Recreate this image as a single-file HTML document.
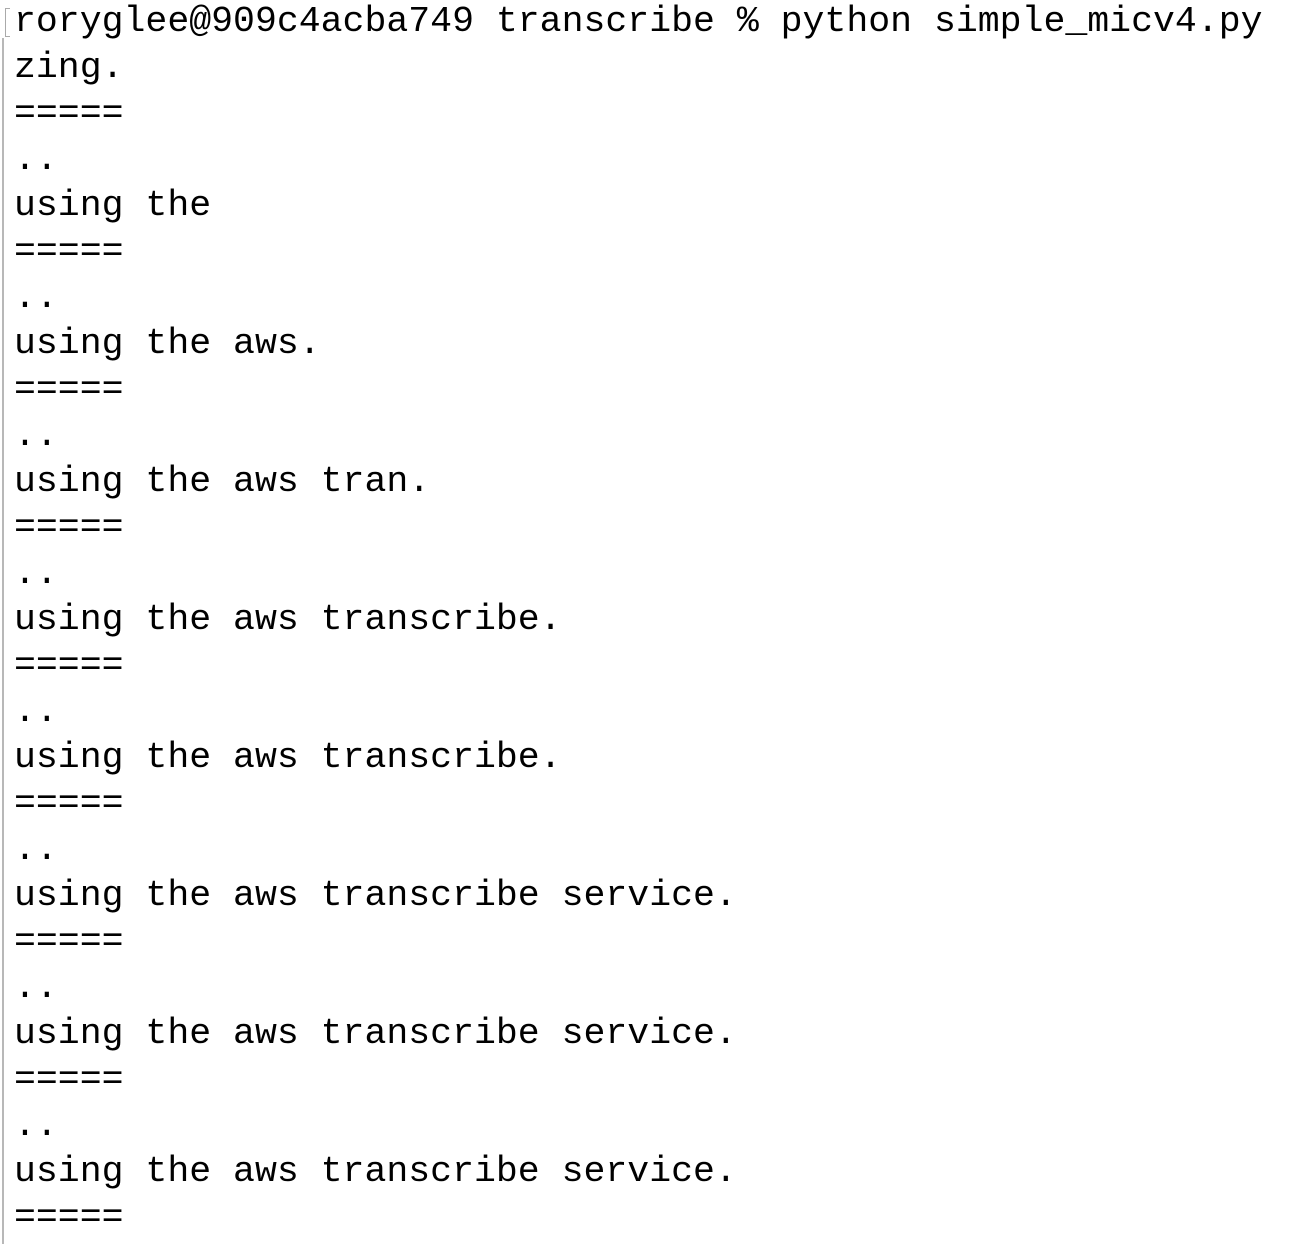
<!DOCTYPE html>
<html><head><meta charset="utf-8"><style>
html,body{margin:0;padding:0;background:#fff;width:1306px;height:1244px;overflow:hidden;}
.bar{position:absolute;left:2px;top:38px;width:2px;height:1206px;background:#b8b8b8;}
.br{position:absolute;left:5px;top:8px;width:4px;height:27px;border:1.5px solid #aaa;border-right:none;}
pre{position:absolute;left:14px;top:-1px;margin:0;font-family:"Liberation Mono",monospace;font-size:36.5px;line-height:46px;color:#000;}
</style></head><body>
<div class="bar"></div><div class="br"></div>
<pre>roryglee@909c4acba749 transcribe % python simple_micv4.py
zing.
=====
..
using the
=====
..
using the aws.
=====
..
using the aws tran.
=====
..
using the aws transcribe.
=====
..
using the aws transcribe.
=====
..
using the aws transcribe service.
=====
..
using the aws transcribe service.
=====
..
using the aws transcribe service.
=====</pre>
</body></html>
